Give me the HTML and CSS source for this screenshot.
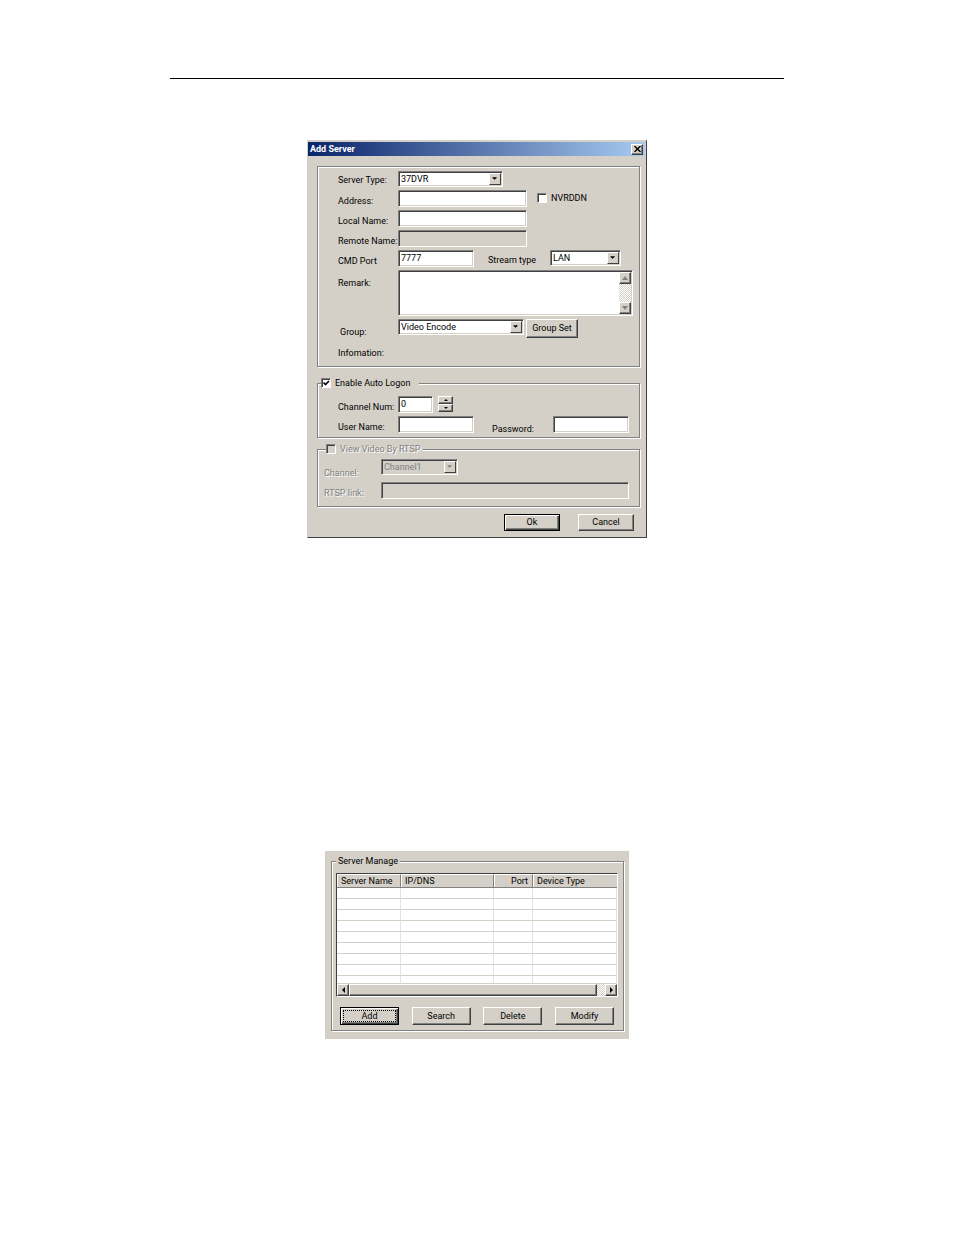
FILE: index.html
```html
<!DOCTYPE html>
<html lang="en">
<head>
<meta charset="utf-8">
<title>Add Server</title>
<link rel="stylesheet" href="styles.css">
</head>
<body>
<main class="page">
  <hr class="rule">

  <form class="dialog">
    <header class="titlebar">
      <h1 class="title">Add Server</h1>
      <button class="close raised" type="button" aria-label="Close">
        <svg width="7" height="6" viewBox="0 0 7 6"><path d="M0.5 0L6.5 6M6.5 0L0.5 6" stroke="#000" stroke-width="1.4"/></svg>
      </button>
    </header>

    <div class="content">
      <fieldset class="group server">
        <div class="row">
          <label class="name type-name" for="type">Server Type:</label>
          <span class="combo w-type"><select id="type"><option>37DVR</option></select><svg class="drop" viewBox="0 0 12 12"><path d="M3 4h5v1h-1v1h-1v1h-1v-1h-1v-1h-1z"/></svg></span>
        </div>
        <div class="row">
          <label class="name" for="address">Address:</label>
          <input class="text w-long" id="address" type="text">
          <label class="check nvr"><input type="checkbox">NVRDDN</label>
        </div>
        <div class="row">
          <label class="name" for="local">Local Name:</label>
          <input class="text w-long" id="local" type="text">
        </div>
        <div class="row">
          <label class="name" for="remote">Remote Name:</label>
          <input class="text w-long" id="remote" type="text" disabled>
        </div>
        <div class="row">
          <label class="name" for="port">CMD Port</label>
          <input class="text w-short" id="port" type="text" value="7777">
          <label class="second" for="stream">Stream type</label>
          <span class="combo w-stream"><select id="stream"><option>LAN</option></select><svg class="drop" viewBox="0 0 12 12"><path d="M3 4h5v1h-1v1h-1v1h-1v-1h-1v-1h-1z"/></svg></span>
        </div>
        <div class="row">
          <label class="name remark-name" for="remark">Remark:</label>
          <div class="memo">
            <textarea id="remark"></textarea>
            <div class="vscroll">
              <button class="raised" type="button" aria-label="Scroll up"><svg width="6" height="4" viewBox="0 0 6 4"><path d="M0 4h6l-3-4z"/></svg></button>
              <button class="raised" type="button" aria-label="Scroll down"><svg width="6" height="4" viewBox="0 0 6 4"><path d="M0 0h6l-3 4z"/></svg></button>
            </div>
          </div>
        </div>
        <div class="row">
          <label class="name group-name" for="group">Group:</label>
          <span class="combo w-group"><select id="group"><option>Video Encode</option></select><svg class="drop" viewBox="0 0 12 12"><path d="M3 4h5v1h-1v1h-1v1h-1v-1h-1v-1h-1z"/></svg></span>
          <button class="push set" type="button">Group Set</button>
        </div>
        <p class="info">Infomation:</p>
      </fieldset>

      <fieldset class="group logon">
        <legend><label class="check"><input type="checkbox" checked>Enable Auto Logon</label></legend>
        <div class="row">
          <label class="name" for="num">Channel Num:</label>
          <input class="text w-num" id="num" type="text" value="0">
          <span class="spin">
            <button class="raised" type="button" aria-label="Increase"><svg width="4" height="2" viewBox="0 0 4 2"><path d="M0 2h4l-2-2z"/></svg></button>
            <button class="raised" type="button" aria-label="Decrease"><svg width="4" height="2" viewBox="0 0 4 2"><path d="M0 0h4l-2 2z"/></svg></button>
          </span>
        </div>
        <div class="row">
          <label class="name" for="user">User Name:</label>
          <input class="text w-short" id="user" type="text">
          <label class="second pass" for="password">Password:</label>
          <input class="text w-short" id="password" type="password">
        </div>
      </fieldset>

      <fieldset class="group rtsp" disabled>
        <legend><label class="check"><input type="checkbox">View Video By RTSP</label></legend>
        <div class="row">
          <label class="name channel-name" for="channel">Channel:</label>
          <span class="combo w-channel"><select id="channel"><option>Channel1</option></select><svg class="drop" viewBox="0 0 12 12"><path d="M3 4h5v1h-1v1h-1v1h-1v-1h-1v-1h-1z"/></svg></span>
        </div>
        <div class="row">
          <label class="name" for="link">RTSP link:</label>
          <input class="text link" id="link" type="text">
        </div>
      </fieldset>

      <footer class="actions">
        <button class="push default" type="submit">Ok</button>
        <button class="push" type="button">Cancel</button>
      </footer>
    </div>
  </form>

  <section class="manager">
    <fieldset class="group servers">
      <legend>Server Manage</legend>
      <div class="list">
        <table>
          <colgroup><col class="c-name"><col class="c-ip"><col class="c-port"><col></colgroup>
          <thead><tr><th>Server Name</th><th>IP/DNS</th><th class="right">Port</th><th>Device Type</th></tr></thead>
          <tbody>
            <tr><td></td><td></td><td></td><td></td></tr>
            <tr><td></td><td></td><td></td><td></td></tr>
            <tr><td></td><td></td><td></td><td></td></tr>
            <tr><td></td><td></td><td></td><td></td></tr>
            <tr><td></td><td></td><td></td><td></td></tr>
            <tr><td></td><td></td><td></td><td></td></tr>
            <tr><td></td><td></td><td></td><td></td></tr>
            <tr><td></td><td></td><td></td><td></td></tr>
            <tr><td></td><td></td><td></td><td></td></tr>
          </tbody>
        </table>
        <div class="hscroll">
          <button class="raised" type="button" aria-label="Scroll left"><svg width="3" height="6" viewBox="0 0 3 6"><path d="M3 0v6l-3-3z"/></svg></button>
          <div class="thumb raised"></div>
          <button class="raised" type="button" aria-label="Scroll right"><svg width="3" height="6" viewBox="0 0 3 6"><path d="M0 0v6l3-3z"/></svg></button>
        </div>
      </div>
      <div class="commands">
        <button class="push default focused" type="button">Add</button>
        <button class="push" type="button">Search</button>
        <button class="push" type="button">Delete</button>
        <button class="push" type="button">Modify</button>
      </div>
    </fieldset>
  </section>
</main>
</body>
</html>
```

FILE: styles.css
```css
:root {
  --face: #d4d0c8;
  --shade: #808080;
  --dark: #404040;
}

* { box-sizing: border-box; }

body {
  margin: 0;
  background: #fff;
  color: #000;
  font: 9px/12px Roboto, sans-serif;
}

button, input, select, textarea {
  margin: 0;
  padding: 0;
  border: 0;
  border-radius: 0;
  color: inherit;
  font: inherit;
  appearance: none;
  outline: none;
}

.page {
  max-width: 614px;
  margin: 0 auto;
  padding: 78px 0 40px;
}

.rule {
  height: 1px;
  margin: 0 0 61px;
  border: 0;
  background: #000;
}

/* Raised and sunken edges */
.raised {
  background: var(--face);
  border: 1px solid;
  border-color: #fff var(--dark) var(--dark) #fff;
  box-shadow: inset -1px -1px var(--shade);
}

.text, .combo, .memo {
  background: #fff;
  border: 1px solid;
  border-color: var(--shade) #fff #fff var(--shade);
  box-shadow: inset 1px 1px var(--dark), inset -1px -1px var(--face);
}

.dialog {
  max-width: 340px;
  margin: 0 auto 313px;
  background: var(--face);
  border: 1px solid;
  border-color: var(--face) var(--dark) var(--dark) var(--face);
}

.titlebar {
  display: flex;
  align-items: center;
  justify-content: space-between;
  height: 14px;
  margin: 1px 1px 0 0;
  padding: 0 2px;
  background: linear-gradient(to right, #0a246a, #a6caf0);
}

.title {
  margin: 0;
  color: #fff;
  font-size: 9px;
  font-weight: bold;
}

.close {
  display: grid;
  place-items: center;
  width: 12px;
  height: 11px;
}

.content { padding: 10px 6px 6px 9px; }

.group {
  min-width: 0;
  margin: 0;
  padding: 0;
  border: 1px solid var(--shade);
  box-shadow: 1px 1px #fff, inset 1px 1px #fff;
}

.group legend {
  padding: 0;
  background: var(--face);
}

.row {
  display: flex;
  align-items: flex-start;
  margin-bottom: 3px;
}

.name {
  flex: none;
  width: 60px;
  padding-top: 5px;
  white-space: nowrap;
}

.text {
  height: 17px;
  padding: 0 2px 2px;
}

.combo {
  position: relative;
  display: block;
  height: 16px;
}

.combo select {
  display: block;
  width: 100%;
  height: 14px;
  padding-left: 2px;
  background: transparent;
  line-height: 14px;
}

.drop {
  position: absolute;
  top: 1px;
  right: 1px;
  width: 12px;
  height: 12px;
  background: var(--face);
  border: 1px solid;
  border-color: #fff var(--dark) var(--dark) #fff;
  pointer-events: none;
}

.w-type { width: 105px; }
.w-long { width: 129px; }
.w-short { width: 76px; }
.w-stream { width: 71px; }
.w-group { width: 126px; }
.w-num { width: 35px; }
.w-channel { width: 77px; }

.check {
  display: flex;
  align-items: center;
  gap: 4px;
  white-space: nowrap;
}

.check input {
  width: 10px;
  height: 10px;
  background: #fff;
  border: 1px solid;
  border-color: var(--shade) #fff #fff var(--shade);
  box-shadow: inset 1px 1px var(--dark);
}

.check input:checked {
  background: #fff url("data:image/svg+xml,%3Csvg xmlns='http://www.w3.org/2000/svg' viewBox='0 0 8 8'%3E%3Cpath d='M1.5 3.5l2 2 3.5-3.5' fill='none' stroke='black' stroke-width='1.6'/%3E%3C/svg%3E") center / 8px 8px no-repeat;
}

.server { padding: 4px 6px 7px 20px; }
.type-name { padding-top: 3px; }
.nvr { margin: 2px 0 0 10px; }
.second { width: 62px; margin-left: 14px; padding-top: 4px; }
.remark-name { padding-top: 7px; }
.group-name { padding: 7px 0 0 2px; }

.memo {
  display: flex;
  flex: 1;
  height: 46px;
  padding: 1px;
}

.memo textarea {
  flex: 1;
  min-width: 0;
  background: transparent;
  resize: none;
}

.vscroll, .hscroll {
  display: flex;
  justify-content: space-between;
  background: repeating-conic-gradient(#fff 0 25%, var(--face) 0 50%) 0 0 / 2px 2px;
}

.vscroll { flex-direction: column; width: 12px; }

.vscroll button, .hscroll button {
  display: grid;
  place-items: center;
  flex: none;
  width: 12px;
  height: 12px;
}

.vscroll svg { fill: var(--shade); }

.push {
  width: 56px;
  height: 17px;
  background: var(--face);
  border: 1px solid;
  border-color: #fff var(--dark) var(--dark) #fff;
  box-shadow: inset -1px -1px var(--shade);
  line-height: 13px;
  text-align: center;
}

.default {
  border-color: #000;
  box-shadow: inset 1px 1px #fff, inset -1px -1px var(--dark), inset -2px -2px var(--shade);
}

.set { width: 52px; height: 19px; margin-left: 2px; }
.info { margin: 9px 0 0; }

.logon { margin-top: 10px; padding: 7px 10px 0 20px; }
.logon legend { margin-left: -17px; padding-right: 9px; }
.logon .row:last-child { margin-bottom: 2px; }
.pass { width: 61px; margin-left: 18px; padding-top: 7px; }

.spin { display: grid; margin-left: 5px; }

.spin button {
  display: grid;
  place-items: center;
  width: 15px;
  height: 8px;
}

.rtsp {
  margin-top: 5px;
  padding: 4px 10px 7px 6px;
  color: var(--shade);
  text-shadow: 1px 1px #fff;
}

.rtsp legend { margin-left: 2px; padding-right: 3px; }
.rtsp .name { width: 57px; }
.rtsp .channel-name { padding-top: 8px; }
.rtsp .row:last-child { margin-bottom: 0; }
.rtsp .check input, .rtsp .combo, .text:disabled { background: var(--face); }
.rtsp select { opacity: 1; text-shadow: none; }
.rtsp .drop { fill: var(--shade); }
.link { flex: 1; min-width: 0; }

.actions {
  display: flex;
  justify-content: flex-end;
  gap: 18px;
  padding: 7px 6px 0 0;
}

.manager {
  max-width: 304px;
  margin: 0 auto;
  padding: 4px 5px 8px 6px;
  background: var(--face);
}

.servers { padding: 6px 5px 5px 4px; }
.servers legend { padding: 0 2px; }

.list {
  border: 1px solid;
  border-color: var(--dark) #fff #fff var(--dark);
}

.list table {
  width: 100%;
  border-collapse: separate;
  border-spacing: 0;
  table-layout: fixed;
  background: #fff;
}

.c-name { width: 64px; }
.c-ip { width: 93px; }
.c-port { width: 39px; }

.list th {
  height: 14px;
  padding: 0 4px;
  background: var(--face);
  border-top: 1px solid #fff;
  border-right: 1px solid var(--shade);
  border-bottom: 1px solid var(--shade);
  box-shadow: inset 1px 0 #fff;
  font-weight: normal;
  line-height: 12px;
  text-align: left;
  white-space: nowrap;
}

.list th:last-child { border-right: 0; }
.list .right { text-align: right; }

.list td {
  height: 11px;
  padding: 0;
  border-right: 1px solid #e4e2de;
  border-bottom: 1px solid var(--face);
}

.list tbody tr:last-child td { height: 8px; }

.thumb { flex: 1; margin-right: 8px; }

.commands {
  display: flex;
  justify-content: space-between;
  margin-top: 10px;
  padding: 0 4px;
}

.commands .push { width: 59px; height: 18px; }

.focused { position: relative; }

.focused::after {
  content: "";
  position: absolute;
  inset: 2px;
  border: 1px dotted #000;
}
```
